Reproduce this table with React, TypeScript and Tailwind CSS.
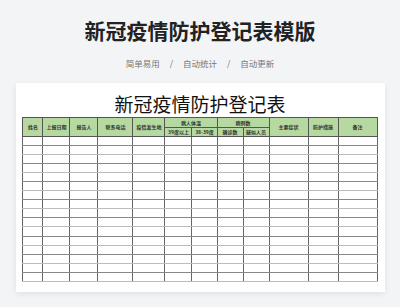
const cols = [20, 27, 28, 35, 32, 27, 25, 26, 26, 39, 30, 39]

export default function App() {
  const rows = Array.from({ length: 16 })

  return (
    <div
      className="flex h-[307px] w-[400px] flex-col items-center overflow-hidden bg-[#f3f4f6]"
      style={{ fontFamily: '"Noto Sans CJK SC", "Noto Sans", sans-serif' }}
    >
      <h1 className="mt-[18px] text-[21px] font-bold leading-[24px] text-[#222]">
        新冠疫情防护登记表模版
      </h1>
      <div className="mt-[15px] flex items-center gap-[10px] text-[8.5px] leading-[12px] text-[#777]">
        <span>简单易用</span>
        <span>/</span>
        <span>自动统计</span>
        <span>/</span>
        <span>自动更新</span>
      </div>

      <div className="mt-[14px] flex w-[369px] flex-col items-center bg-white px-[8px] pb-[10px] shadow-[0_2px_6px_rgba(0,0,0,0.08)]">
        <div className="mt-[8px] h-[26px] text-[19px] leading-[26px] text-[#111]">
          新冠疫情防护登记表
        </div>
        <table className="w-[354px] table-fixed border-collapse border border-[#555] text-[5px] text-[#333]">
          <colgroup>
            {cols.map((w, i) => (
              <col key={i} style={{ width: w }} />
            ))}
          </colgroup>
          <thead className="bg-[#b5d9a0]">
            <tr className="h-[10px]">
              <th rowSpan={2} className="border border-[#555] font-bold">姓名</th>
              <th rowSpan={2} className="border border-[#555] font-bold">上报日期</th>
              <th rowSpan={2} className="border border-[#555] font-bold">报告人</th>
              <th rowSpan={2} className="border border-[#555] font-bold">联系电话</th>
              <th rowSpan={2} className="border border-[#555] font-bold">疫情发生地</th>
              <th colSpan={2} className="border border-[#555] font-bold">病人体温</th>
              <th colSpan={2} className="border border-[#555] font-bold">病例数</th>
              <th rowSpan={2} className="border border-[#555] font-bold">主要症状</th>
              <th rowSpan={2} className="border border-[#555] font-bold">防护措施</th>
              <th rowSpan={2} className="border border-[#555] font-bold">备注</th>
            </tr>
            <tr className="h-[8px]">
              <th className="border border-[#555] font-bold">39度以上</th>
              <th className="border border-[#555] font-bold">38-39度</th>
              <th className="border border-[#555] font-bold">确诊数</th>
              <th className="border border-[#555] font-bold">疑似人员</th>
            </tr>
          </thead>
          <tbody>
            {rows.map((_, r) => (
              <tr key={r} className="h-[9.1px]">
                {cols.map((_, c) => (
                  <td
                    key={c}
                    className={`border-x border-x-[#666] border-y ${
                      r % 2 === 0 ? "border-y-[#888]" : "border-y-[#bbb]"
                    }`}
                  />
                ))}
              </tr>
            ))}
          </tbody>
        </table>
      </div>
    </div>
  )
}
